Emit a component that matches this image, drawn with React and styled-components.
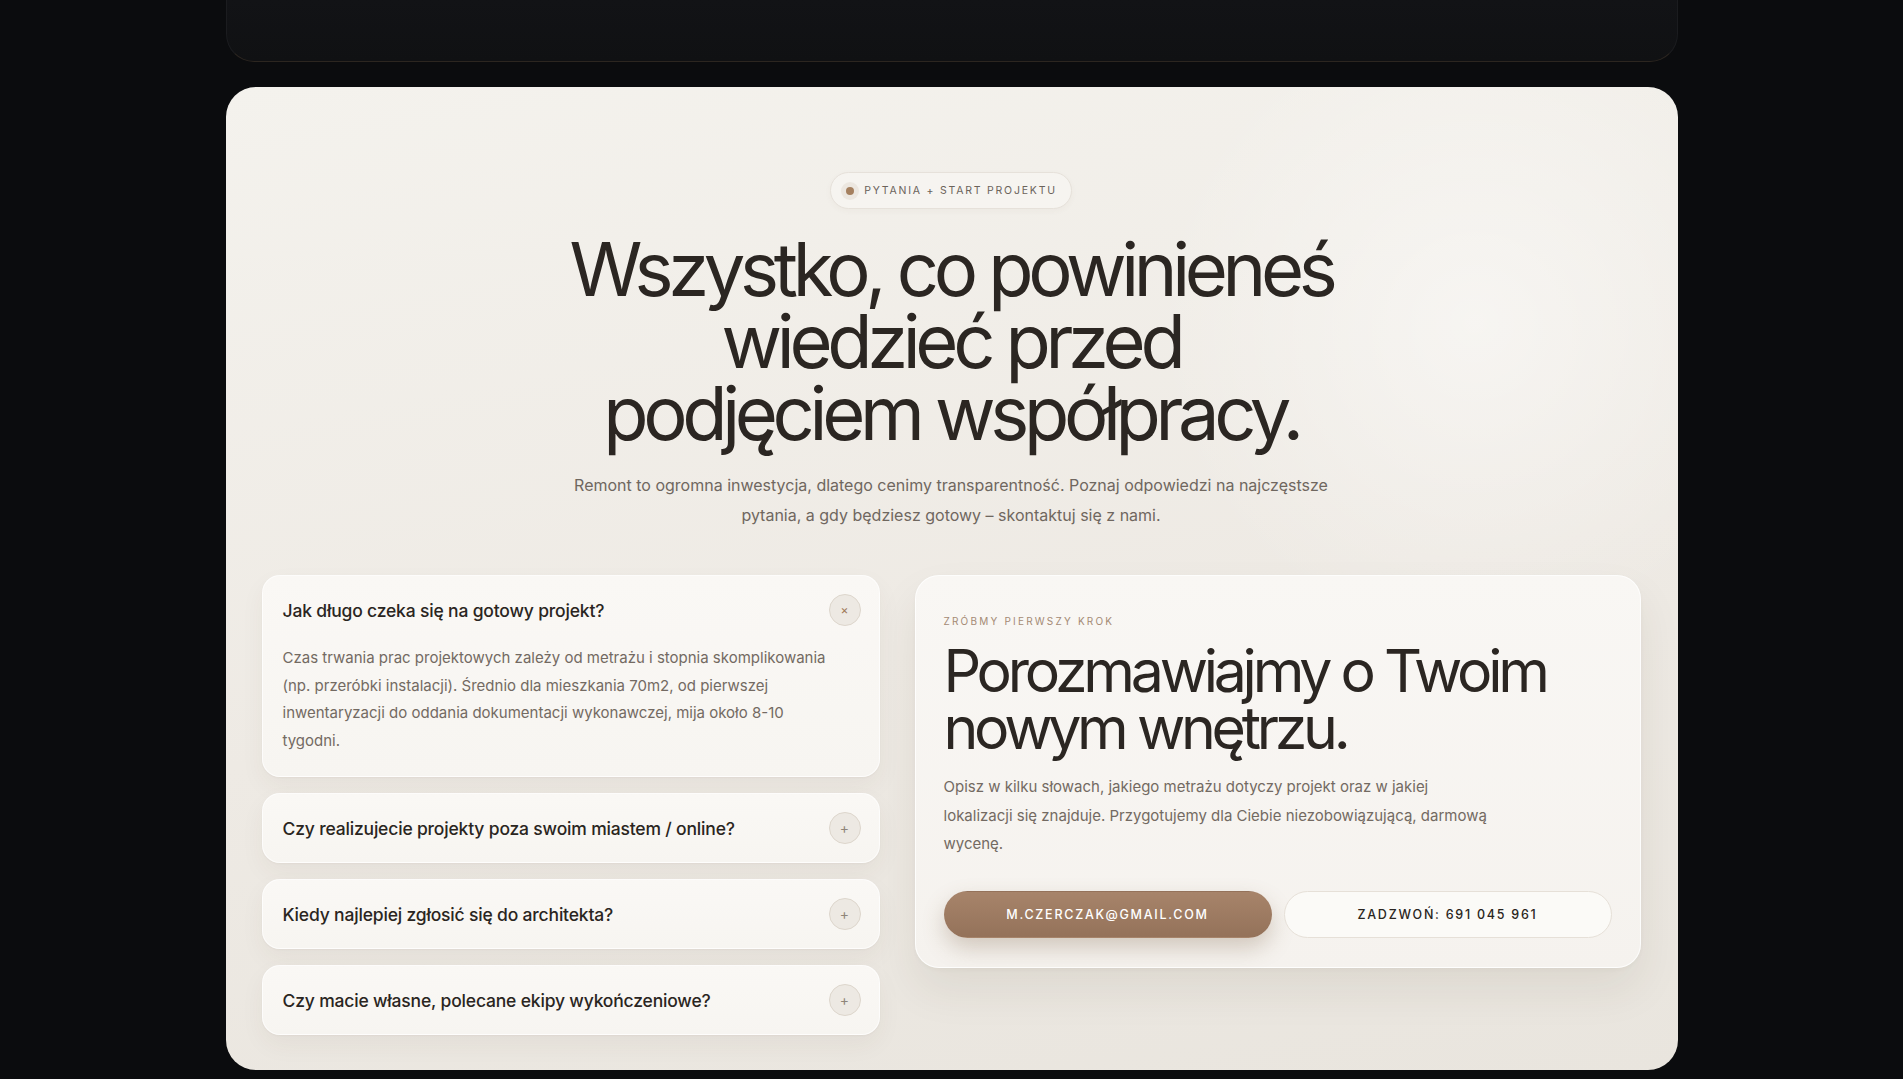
import React from 'react';
import styled, { createGlobalStyle } from 'styled-components';

const GlobalStyle = createGlobalStyle`
  * {
    box-sizing: border-box;
  }

  body {
    margin: 0;
    background: #0b0c0e;
    font-family: 'Inter', 'Noto Sans', sans-serif;
    -webkit-font-smoothing: antialiased;
  }
`;

const Page = styled.main`
  width: 1452px;
  margin: 0 auto;
  padding-bottom: 10px;
`;

const PrevSection = styled.div`
  height: 62px;
  background: linear-gradient(180deg, #121316 0%, #101113 100%);
  border: 1px solid #1b1c1f;
  border-top: none;
  border-bottom-color: #2c2620;
  border-radius: 0 0 28px 28px;
`;

const Section = styled.section`
  margin-top: 25px;
  padding: 85px 37px 35px 36px;
  border-radius: 30px;
  background:
    radial-gradient(circle at 86% 24%, rgba(255, 255, 255, 0.45) 0%, rgba(255, 255, 255, 0) 22%),
    linear-gradient(170deg, #f4f2ed 0%, #eeeae4 55%, #e9e5de 100%);
`;

const Header = styled.header`
  display: flex;
  flex-direction: column;
  align-items: center;
  text-align: center;
`;

const Badge = styled.div`
  display: inline-flex;
  align-items: center;
  gap: 5px;
  height: 37px;
  padding: 0 14px 0 10px;
  border-radius: 999px;
  background: #f6f4f0;
  border: 1px solid #e6e1da;
  box-shadow: 0 2px 6px rgba(90, 70, 50, 0.04);
  font-size: 10.5px;
  letter-spacing: 0.17em;
  color: #6b635b;
  text-transform: uppercase;
`;

const Dot = styled.span`
  width: 18px;
  height: 18px;
  border-radius: 50%;
  background: #ece7e0;
  display: flex;
  align-items: center;
  justify-content: center;

  &::after {
    content: '';
    width: 8px;
    height: 8px;
    border-radius: 50%;
    background: #a5805f;
  }
`;

const Title = styled.h2`
  margin: 24px 0 0;
  font-size: 74px;
  line-height: 72px;
  font-weight: 400;
  letter-spacing: -0.072em;
  color: #2b2622;
`;

const Lead = styled.p`
  margin: 21px 0 0;
  max-width: 780px;
  font-size: 16px;
  line-height: 30px;
  color: #6f675f;
`;

const Grid = styled.div`
  margin-top: 45px;
  display: grid;
  grid-template-columns: 618px 1fr;
  gap: 35px;
  align-items: start;
`;

const FaqList = styled.div`
  display: flex;
  flex-direction: column;
  gap: 16px;
`;

const FaqItem = styled.div`
  padding: 0 18px 0 20px;
  border-radius: 18px;
  background: linear-gradient(180deg, #faf8f5 0%, #f7f5f1 100%);
  border: 1px solid rgba(255, 255, 255, 0.7);
  box-shadow: 0 1px 2px rgba(70, 50, 30, 0.04), 0 10px 24px rgba(70, 50, 30, 0.05);
`;

const FaqHead = styled.div`
  height: 68px;
  display: flex;
  align-items: center;
  justify-content: space-between;
`;

const Question = styled.h3`
  margin: 0;
  font-size: 17.5px;
  font-weight: 500;
  letter-spacing: -0.01em;
  color: #2a2521;
`;

const Toggle = styled.span`
  width: 32px;
  height: 32px;
  border-radius: 50%;
  display: flex;
  align-items: center;
  justify-content: center;
  background: #ede9e3;
  border: 1px solid #ddd6cc;
  font-size: ${({ $open }) => ($open ? '12px' : '14px')};
  line-height: 1;
  color: ${({ $open }) => ($open ? '#a07a5a' : '#8f857a')};
`;

const Answer = styled.p`
  margin: 0;
  padding-bottom: 22px;
  max-width: 550px;
  font-size: 15px;
  line-height: 27.5px;
  color: #736a62;
`;

const ContactCard = styled.div`
  padding: 38px 28px 29px;
  border-radius: 24px;
  background: linear-gradient(180deg, #f9f7f4 0%, #f5f2ee 100%);
  border: 1px solid rgba(255, 255, 255, 0.8);
  box-shadow: 0 2px 4px rgba(70, 50, 30, 0.03), 0 22px 44px rgba(70, 50, 30, 0.08);
`;

const Eyebrow = styled.div`
  font-size: 10px;
  line-height: 14px;
  letter-spacing: 0.22em;
  text-transform: uppercase;
  color: #a48a74;
`;

const ContactTitle = styled.h2`
  margin: 14px 0 0;
  font-size: 59px;
  line-height: 57px;
  font-weight: 400;
  letter-spacing: -0.072em;
  color: #2b2622;
`;

const ContactText = styled.p`
  margin: 17px 0 0;
  max-width: 580px;
  font-size: 15px;
  line-height: 28.5px;
  color: #736a62;
`;

const Actions = styled.div`
  margin-top: 32px;
  display: flex;
  gap: 12px;
`;

const Button = styled.a`
  flex: 1;
  height: 47px;
  display: flex;
  align-items: center;
  justify-content: center;
  border-radius: 999px;
  font-size: 12.5px;
  font-weight: 500;
  letter-spacing: 0.14em;
  text-transform: uppercase;
  text-decoration: none;
  color: ${({ $primary }) => ($primary ? '#ffffff' : '#2a2521')};
  background: ${({ $primary }) =>
    $primary ? 'linear-gradient(180deg, #a7846a 0%, #94725a 100%)' : '#fbfaf7'};
  border: 1px solid ${({ $primary }) => ($primary ? 'transparent' : '#e6e0d8')};
  box-shadow: ${({ $primary }) =>
    $primary ? '0 10px 22px rgba(120, 88, 60, 0.28)' : 'none'};
`;

const faqs = [
  {
    q: 'Jak długo czeka się na gotowy projekt?',
    a: 'Czas trwania prac projektowych zależy od metrażu i stopnia skomplikowania (np. przeróbki instalacji). Średnio dla mieszkania 70m2, od pierwszej inwentaryzacji do oddania dokumentacji wykonawczej, mija około 8-10 tygodni.',
    open: true
  },
  { q: 'Czy realizujecie projekty poza swoim miastem / online?' },
  { q: 'Kiedy najlepiej zgłosić się do architekta?' },
  { q: 'Czy macie własne, polecane ekipy wykończeniowe?' }
];

const App = () => (
  <>
    <GlobalStyle />
    <Page>
      <PrevSection />
      <Section>
        <Header>
          <Badge>
            <Dot />
            Pytania + Start projektu
          </Badge>
          <Title>
            Wszystko, co powinieneś
            <br />
            wiedzieć przed
            <br />
            podjęciem współpracy.
          </Title>
          <Lead>
            Remont to ogromna inwestycja, dlatego cenimy transparentność. Poznaj odpowiedzi na najczęstsze
            pytania, a gdy będziesz gotowy – skontaktuj się z nami.
          </Lead>
        </Header>

        <Grid>
          <FaqList>
            {faqs.map((item) => (
              <FaqItem key={item.q}>
                <FaqHead>
                  <Question>{item.q}</Question>
                  <Toggle $open={item.open}>{item.open ? '×' : '+'}</Toggle>
                </FaqHead>
                {item.open && <Answer>{item.a}</Answer>}
              </FaqItem>
            ))}
          </FaqList>

          <ContactCard>
            <Eyebrow>Zróbmy pierwszy krok</Eyebrow>
            <ContactTitle>
              Porozmawiajmy o Twoim
              <br />
              nowym wnętrzu.
            </ContactTitle>
            <ContactText>
              Opisz w kilku słowach, jakiego metrażu dotyczy projekt oraz w jakiej
              <br />
              lokalizacji się znajduje. Przygotujemy dla Ciebie niezobowiązującą, darmową
              <br />
              wycenę.
            </ContactText>
            <Actions>
              <Button $primary href="#">m.czerczak@gmail.com</Button>
              <Button href="#">Zadzwoń: 691 045 961</Button>
            </Actions>
          </ContactCard>
        </Grid>
      </Section>
    </Page>
  </>
);

export default App;
